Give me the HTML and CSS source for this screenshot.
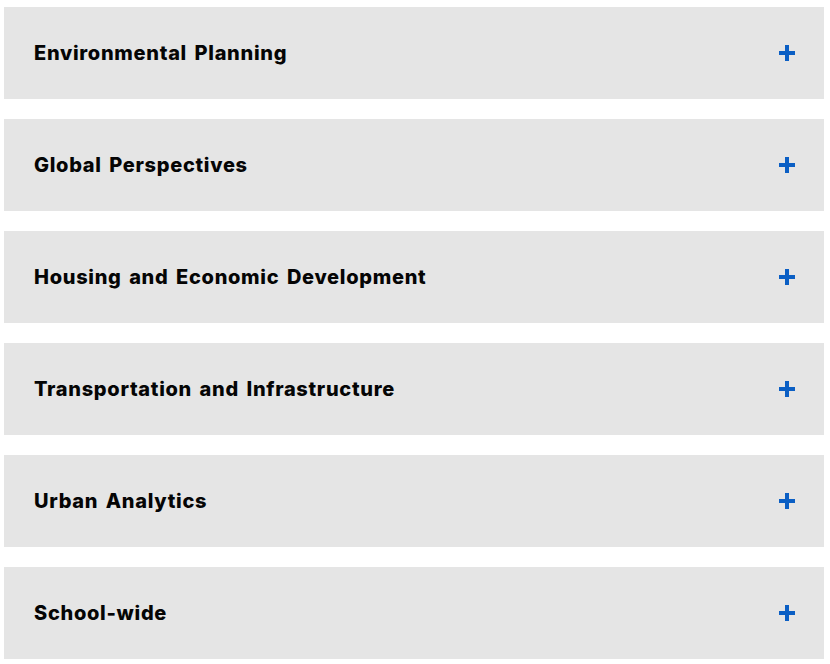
FILE: index.html
```html
<!DOCTYPE html>
<html lang="en">
<head>
  <meta charset="UTF-8">
  <title>Research Areas</title>
  <meta name="viewport" content="width=device-width, initial-scale=1.0" />
  <link rel="stylesheet" href="styles.css">
</head>
<body>
  <div class="accordion">
    <button class="acc-item">
      <span class="acc-title">Environmental Planning</span>
      <span class="acc-plus"></span>
    </button>
    <button class="acc-item">
      <span class="acc-title">Global Perspectives</span>
      <span class="acc-plus"></span>
    </button>
    <button class="acc-item">
      <span class="acc-title">Housing and Economic Development</span>
      <span class="acc-plus"></span>
    </button>
    <button class="acc-item">
      <span class="acc-title">Transportation and Infrastructure</span>
      <span class="acc-plus"></span>
    </button>
    <button class="acc-item">
      <span class="acc-title">Urban Analytics</span>
      <span class="acc-plus"></span>
    </button>
    <button class="acc-item">
      <span class="acc-title">School-wide</span>
      <span class="acc-plus"></span>
    </button>
  </div>
</body>
</html>
```

FILE: styles.css
```css
body {
  margin: 0;
  background: #fff;
  font-family: Inter, "Liberation Sans", sans-serif;
}

.accordion {
  display: flex;
  flex-direction: column;
  gap: 20px;
  padding: 7px 6px 0 4px;
}

.acc-item {
  display: flex;
  align-items: center;
  justify-content: space-between;
  height: 92px;
  padding: 0 29px 0 30px;
  border: none;
  background: #e5e5e5;
  font: inherit;
  text-align: left;
  cursor: pointer;
}

.acc-title {
  font-size: 20px;
  font-weight: 800;
  letter-spacing: 0.7px;
  word-spacing: 2.5px;
  color: #050505;
}

/* plus sign drawn from two bars */
.acc-plus {
  position: relative;
  width: 16px;
  height: 16px;
}

.acc-plus::before,
.acc-plus::after {
  content: "";
  position: absolute;
  background: #0b5fc4;
}

.acc-plus::before {
  left: 0;
  top: 6px;
  width: 16px;
  height: 4px;
}

.acc-plus::after {
  left: 6px;
  top: 0;
  width: 4px;
  height: 16px;
}
```
